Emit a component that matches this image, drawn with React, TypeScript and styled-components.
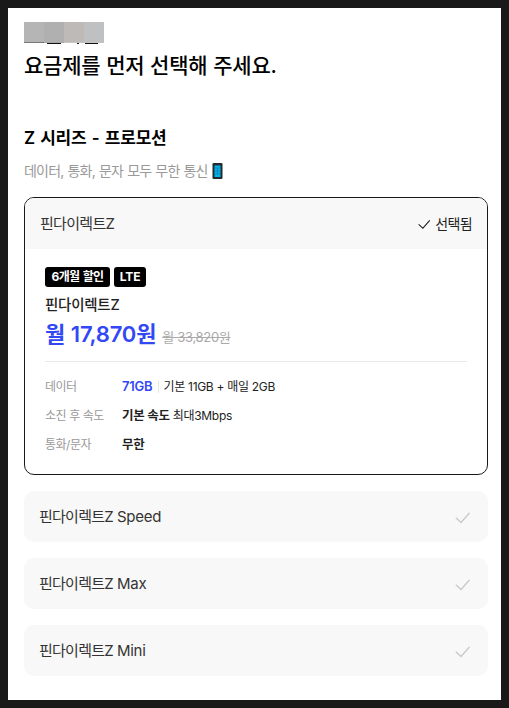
import React from 'react';
import styled, { createGlobalStyle } from 'styled-components';

const Global = createGlobalStyle`
  * { box-sizing: border-box; }
  body { margin: 0; background: #191919; font-family: Inter, "Noto Sans CJK KR", sans-serif; }
`;

const Screen = styled.main`
  height: 692px;
  margin: 8px;
  padding: 14px 13px 0 16px;
  background: #fff;
`;

const Text = styled.span<{ $size: number; $weight?: number; $track?: number; $word?: number; $color?: string }>`
  font-size: ${p => p.$size}px;
  font-weight: ${p => p.$weight ?? 400};
  letter-spacing: ${p => p.$track ?? 0}px;
  word-spacing: ${p => p.$word ?? 0}px;
  color: ${p => p.$color ?? '#222'};
  white-space: pre;
`;

const Heading = styled.h1`
  display: flex;
  flex-direction: column;
  margin: 0;
  line-height: 32px;
`;

const Redacted = styled.svg`
  display: block;
  width: 80px;
  height: 23px;
  margin-bottom: 5px;
`;

const SectionTitle = styled.h2`
  display: flex;
  margin: 40px 0 0;
  height: 32px;
  line-height: 32px;
`;

const Caption = styled.div`
  display: flex;
  align-items: center;
  gap: 4px;
  height: 34px;
  line-height: 34px;
  margin-bottom: 9px;
`;

const Selected = styled.section`
  height: 278px;
  margin-bottom: 16px;
  border: 1px solid #191919;
  border-radius: 10px;
  overflow: hidden;
`;

const SelectedHead = styled.header`
  display: flex;
  align-items: center;
  justify-content: space-between;
  height: 51px;
  padding: 0 15px 2px;
  background: #f8f8f8;
`;

const Status = styled.div`
  display: flex;
  align-items: center;
  gap: 4px;
  padding-top: 1px;

  svg { margin-top: 3px; }
`;

const Body = styled.div`
  display: flex;
  flex-direction: column;
  padding: 18px 20px 0;
`;

const Badges = styled.div`
  display: flex;
  gap: 4px;
`;

const Badge = styled.div<{ $width: number }>`
  display: flex;
  align-items: center;
  justify-content: center;
  width: ${p => p.$width}px;
  height: 20px;
  line-height: 20px;
  border-radius: 3px;
  background: #000;
`;

const PlanName = styled.div`
  display: flex;
  height: 32px;
  line-height: 35px;
`;

const Price = styled.div`
  display: flex;
  align-items: baseline;
  gap: 6px;
  height: 43px;
  line-height: 30px;
  border-bottom: 1px solid #e9e9e9;
`;

const OldPrice = styled(Text)`
  text-decoration: line-through;
`;

const Specs = styled.dl`
  display: grid;
  grid-template-columns: 77px 1fr;
  grid-auto-rows: 29px;
  margin: 10px 0 0;
  line-height: 29px;
`;

const Term = styled.dt`
  display: flex;
`;

const Detail = styled.dd`
  display: flex;
  align-items: center;
  margin: 0;
`;

const Bar = styled.i`
  width: 1px;
  height: 12px;
  margin: 0 5px;
  background: #e6e6e6;
`;

const Option = styled.div`
  display: flex;
  align-items: center;
  justify-content: space-between;
  height: 51px;
  margin-bottom: 16px;
  padding: 0 17px 2px 15px;
  border-radius: 10px;
  background: #f8f8f8;

  svg { margin-top: 4px; }
`;

const Check = ({ size, color }: { size: number; color: string }) => (
  <svg width={size} height={size} viewBox="0 0 16 16" fill="none" stroke={color} strokeWidth="1.3" strokeLinecap="round">
    <path d="M1.2 8.1 6 12.5 14.2 3.3" />
  </svg>
);

const Phone = () => (
  <svg width="11" height="16" viewBox="0 0 11 16">
    <rect x="0.5" width="10" height="16" rx="1.2" fill="#242a2e" />
    <rect x="2.5" y="2.5" width="6" height="11.5" fill="#00b4f0" />
    <path d="M2.5 5h6M2.5 8h6M2.5 11h6M5.5 5v6" stroke="#14607f" strokeWidth=".5" />
  </svg>
);

const OPTIONS = ['Speed', 'Max', 'Mini'];

export default function App() {
  return (
    <>
      <Global />
      <Screen>
        <Heading>
          <Redacted viewBox="0 0 80 23" shapeRendering="crispEdges">
            <rect width="20" height="20" fill="#b5b5b5" />
            <rect x="20" width="20" height="20" fill="#b0b0b0" />
            <rect x="40" width="20" height="20" fill="#bdbab7" />
            <rect x="60" width="20" height="20" fill="#bfc0c1" />
            <rect y="20" width="20" height="1" fill="#777" />
            <rect x="20" y="20" width="20" height="1" fill="#a6a6a6" />
            <rect x="40" y="20" width="40" height="1" fill="#c4c4c4" />
            <path d="M23 21h14v1h-14zM53 21h2v1h-2zM61 21h13v1h-13z" fill="#111" />
          </Redacted>
          <Text $size={21} $weight={500} $track={-0.2} $word={0.3} $color="#000">요금제를 먼저 선택해 주세요.</Text>
        </Heading>
        <SectionTitle>
          <Text $size={17} $weight={600} $track={-0.2} $word={1.2} $color="#000">Z 시리즈 - 프로모션</Text>
        </SectionTitle>
        <Caption>
          <Text $size={14} $track={-0.8} $word={0.9} $color="#999">데이터, 통화, 문자 모두 무한 통신</Text>
          <Phone />
        </Caption>

        <Selected>
          <SelectedHead>
            <Text $size={15} $track={-0.7} $color="#333">핀다이렉트Z</Text>
            <Status>
              <Check size={13} color="#222" />
              <Text $size={14} $track={-0.6}>선택됨</Text>
            </Status>
          </SelectedHead>
          <Body>
            <Badges>
              <Badge $width={65}><Text $size={12} $weight={700} $track={-0.6} $word={0.9} $color="#fff">6개월 할인</Text></Badge>
              <Badge $width={32}><Text $size={12} $weight={700} $track={-0.1} $color="#fff">LTE</Text></Badge>
            </Badges>
            <PlanName>
              <Text $size={14.5} $weight={500} $track={-0.25}>핀다이렉트Z</Text>
            </PlanName>
            <Price>
              <Text $size={22} $weight={600} $track={-0.2} $word={0.4} $color="#3348f5">월 17,870원</Text>
              <OldPrice $size={13} $track={-0.3} $color="#aaa">월 33,820원</OldPrice>
            </Price>
            <Specs>
              <Term><Text $size={12} $track={-0.5} $word={0.2} $color="#999">데이터</Text></Term>
              <Detail>
                <Text $size={13} $weight={600} $track={-0.2} $color="#3348f5">71GB</Text>
                <Bar />
                <Text $size={12} $track={-0.3}>기본 11GB + 매일 2GB</Text>
              </Detail>
              <Term><Text $size={12} $track={-0.5} $word={0.2} $color="#999">소진 후 속도</Text></Term>
              <Detail>
                <Text $size={12.5} $weight={600} $track={-0.3} $word={0.1}>기본 속도 </Text>
                <Text $size={12} $track={-0.3}>최대3Mbps</Text>
              </Detail>
              <Term><Text $size={12} $track={-0.5} $color="#999">통화/문자</Text></Term>
              <Detail>
                <Text $size={12.5} $weight={600} $track={-0.3}>무한</Text>
              </Detail>
            </Specs>
          </Body>
        </Selected>

        {OPTIONS.map(name => (
          <Option key={name}>
            <Text $size={15} $color="#333" $track={-0.75} $word={0.5}>핀다이렉트Z <Text $size={15} $track={-0.25} $color="#333">{name}</Text></Text>
            <Check size={16} color="#c9c9c9" />
          </Option>
        ))}
      </Screen>
    </>
  );
}
